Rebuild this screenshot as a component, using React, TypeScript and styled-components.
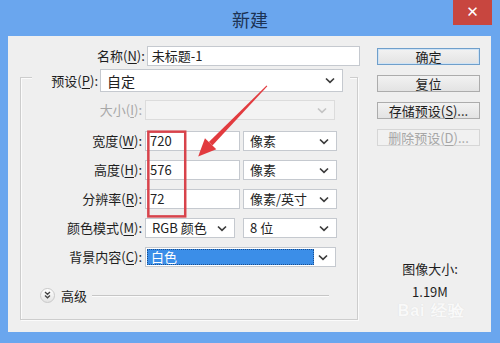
import React from 'react'
import styled, { createGlobalStyle } from 'styled-components'

const GlobalStyle = createGlobalStyle`
  html, body {
    margin: 0;
    padding: 0;
    background: #6aa6ee;
  }
  body {
    font-family: "Noto Sans CJK SC", "Noto Sans", sans-serif;
  }
`

const Window = styled.div`
  width: 500px;
  height: 343px;
  background: #6aa6ee;
  display: flex;
  flex-direction: column;
  overflow: hidden;
`

const TitleBar = styled.div`
  height: 36px;
  display: grid;
  grid-template-columns: 1fr auto 1fr;
  flex-shrink: 0;
`

const Title = styled.div`
  grid-column: 2;
  align-self: center;
  font-size: 18px;
  line-height: 20px;
  color: #1c3354;
  padding-top: 1px;
`

const CloseButton = styled.div`
  grid-column: 3;
  justify-self: end;
  align-self: start;
  margin-right: 8px;
  width: 39px;
  height: 25px;
  background: #c8463f;
  color: #fff;
  font-family: "DejaVu Sans", sans-serif;
  font-size: 15px;
  font-weight: bold;
  line-height: 25px;
  text-align: center;
`

const Client = styled.div`
  position: relative;
  margin: 0 9px 11px 8px;
  flex: 1;
  background: #efefef;
  display: flex;
  font-size: 13px;
  color: #1e1e1e;
`

const LeftPane = styled.div`
  width: 352px;
  padding-top: 10px;
`

const RightPane = styled.div`
  width: 103px;
  margin-left: 17px;
  padding-top: 12px;
  display: flex;
  flex-direction: column;
  gap: 10px;
`

const Row = styled.div<{ $labelWidth: number }>`
  display: grid;
  grid-template-columns: ${p => p.$labelWidth}px auto auto;
  justify-content: start;
  column-gap: 3px;
  align-items: center;
  height: 20px;
`

const Label = styled.span<{ $disabled?: boolean }>`
  text-align: right;
  white-space: nowrap;
  line-height: 20px;
  color: ${p => (p.$disabled ? '#a8a8a8' : '#1e1e1e')};
  u {
    text-underline-offset: 2px;
  }
`

const TextBox = styled.div<{ $width: number }>`
  width: ${p => p.$width}px;
  height: 20px;
  box-sizing: border-box;
  border: 1px solid #c5c9cf;
  background: #fff;
  padding-left: 4px;
  line-height: 18px;
  color: #222;
  font-size: 13px;
`

const Select = styled.div<{ $width: number; $height?: number; $disabled?: boolean }>`
  width: ${p => p.$width}px;
  height: ${p => p.$height || 20}px;
  box-sizing: border-box;
  border: 1px solid ${p => (p.$disabled ? '#dcdcdc' : '#c5c9cf')};
  background: ${p => (p.$disabled ? '#f3f3f3' : '#fff')};
  display: flex;
  align-items: center;
  justify-content: space-between;
  padding: 0 7px 0 6px;
  color: #222;
  line-height: 18px;
  svg {
    flex-shrink: 0;
  }
`

const Highlight = styled.div`
  flex: 1;
  align-self: stretch;
  margin: 1px 4px 1px -5px;
  background: #3b8ee8;
  outline: 1px dotted #1a4f8f;
  outline-offset: -1px;
  color: #fff;
  padding-left: 4px;
  line-height: 16px;
`

const NameRow = styled.div`
  display: flex;
  align-items: center;
  gap: 2px;
  height: 20px;
  padding-left: 89px;
`

const GroupBox = styled.div`
  margin: 11px 0 0 12px;
  width: 338px;
  height: 243px;
  box-sizing: border-box;
  border: 1px solid #cdcdcd;
  box-shadow: inset 1px 1px 0 #fbfbfb, 1px 1px 0 #fbfbfb;
  display: flex;
  flex-direction: column;
`

const GroupHeader = styled.div`
  margin: -9px 0 0 11px;
  width: 318px;
  height: 23px;
  background: #efefef;
  display: flex;
  align-items: center;
  gap: 2px;
`

const Fields = styled.div`
  display: flex;
  flex-direction: column;
  gap: 9px;
  margin-top: 8px;
`

const Advanced = styled.div`
  display: flex;
  align-items: center;
  margin: 20px 0 0 19px;
  height: 16px;
`

const RoundToggle = styled.div`
  width: 15px;
  height: 15px;
  border-radius: 50%;
  box-sizing: border-box;
  border: 1px solid #c9c9c9;
  background: linear-gradient(#ffffff, #e3e3e3);
  display: flex;
  align-items: center;
  justify-content: center;
  margin-right: 6px;
`

const AdvancedRule = styled.div`
  flex: 0 0 237px;
  margin-left: 5px;
  height: 1px;
  background: #c6c6c6;
  box-shadow: 0 1px 0 #fbfbfb;
`

const Button = styled.div<{ $primary?: boolean; $disabled?: boolean }>`
  height: 17px;
  box-sizing: border-box;
  border: 1px solid ${p => (p.$primary ? '#6f9fcb' : p.$disabled ? '#d6d6d6' : '#acacac')};
  background: ${p =>
    p.$disabled ? '#f1f1f1' : 'linear-gradient(#f2f2f2, #e3e3e3)'};
  box-shadow: ${p => (p.$primary ? 'inset 0 0 0 1px #cfe3f5' : 'none')};
  text-align: center;
  line-height: 15px;
  font-size: 13px;
  color: ${p => (p.$disabled ? '#a6a6a6' : '#1e1e1e')};
  u {
    text-underline-offset: 2px;
  }
`

const SizeInfo = styled.div`
  margin-top: 101px;
  text-align: center;
  line-height: 23px;
  font-size: 13px;
  color: #1e1e1e;
  padding-left: 3px;
`

const Watermark = styled.div`
  position: absolute;
  right: 26px;
  bottom: 12px;
  color: #f9f9f9;
  font-family: "Liberation Sans", Arial, sans-serif;
  font-size: 16px;
  line-height: 18px;
  font-weight: bold;
  letter-spacing: 1px;
  text-shadow: 0 0 1px #dadada;
  pointer-events: none;
`

const Annotation = styled.svg`
  position: absolute;
  left: 0;
  top: 0;
  width: 100%;
  height: 100%;
  pointer-events: none;
`

const Chevron = ({ light }: { light?: boolean }) => (
  <svg width="10" height="7" viewBox="0 0 10 7">
    <path
      d="M1 1.5 L5 5.3 L9 1.5"
      fill="none"
      stroke={light ? '#c4c4c4' : '#3c3c3c'}
      strokeWidth="1.7"
    />
  </svg>
)

const fields = [
  { label: '宽度', key: 'W', value: '720', unit: '像素' },
  { label: '高度', key: 'H', value: '576', unit: '像素' },
  { label: '分辨率', key: 'R', value: '72', unit: '像素/英寸' },
]

export default function App() {
  return (
    <Window>
      <GlobalStyle />
      <TitleBar>
        <Title>新建</Title>
        <CloseButton>✕</CloseButton>
      </TitleBar>

      <Client>
        <LeftPane>
          <NameRow>
            <Label>
              名称(<u>N</u>):
            </Label>
            <TextBox $width={216}>未标题-1</TextBox>
          </NameRow>

          <GroupBox>
            <GroupHeader>
              <Label style={{ width: 66 }}>
                预设(<u>P</u>):
              </Label>
              <Select $width={243} $height={23}>
                <span style={{ fontSize: 14 }}>自定</span>
                <Chevron />
              </Select>
            </GroupHeader>

            <Fields>
              <Row $labelWidth={121}>
                <Label $disabled>
                  大小(<u>I</u>):
                </Label>
                <Select $width={190} $disabled>
                  <span />
                  <Chevron light />
                </Select>
              </Row>

              {fields.map(f => (
                <Row $labelWidth={121} key={f.key} style={{ marginTop: f.key === 'W' ? 2 : 0 }}>
                  <Label>
                    {f.label}(<u>{f.key}</u>):
                  </Label>
                  <TextBox $width={95}>{f.value}</TextBox>
                  <Select $width={94}>
                    <span>{f.unit}</span>
                    <Chevron />
                  </Select>
                </Row>
              ))}

              <Row $labelWidth={121}>
                <Label>
                  颜色模式(<u>M</u>):
                </Label>
                <Select $width={90}>
                  <span>RGB 颜色</span>
                  <Chevron />
                </Select>
                <Select $width={94} style={{ marginLeft: 5 }}>
                  <span>8 位</span>
                  <Chevron />
                </Select>
              </Row>

              <Row $labelWidth={121}>
                <Label>
                  背景内容(<u>C</u>):
                </Label>
                <Select $width={191}>
                  <Highlight>白色</Highlight>
                  <Chevron />
                </Select>
              </Row>
            </Fields>

            <Advanced>
              <RoundToggle>
                <svg width="7" height="8" viewBox="0 0 7 8">
                  <path
                    d="M1 1 L3.5 3.3 L6 1 M1 4.5 L3.5 6.8 L6 4.5"
                    fill="none"
                    stroke="#444"
                    strokeWidth="1.3"
                  />
                </svg>
              </RoundToggle>
              <span>高级</span>
              <AdvancedRule />
            </Advanced>
          </GroupBox>
        </LeftPane>

        <RightPane>
          <Button $primary>确定</Button>
          <Button>复位</Button>
          <Button>
            存储预设(<u>S</u>)...
          </Button>
          <Button $disabled>
            删除预设(<u>D</u>)...
          </Button>
          <SizeInfo>
            图像大小:
            <br />
            1.19M
          </SizeInfo>
        </RightPane>

        <Watermark>Bai 经验</Watermark>

        <Annotation viewBox="0 0 483 297">
          <rect x="140" y="96" width="37" height="85" fill="none" stroke="#d8434b" strokeWidth="2.5" />
          <polygon points="259.4,50.3 258.6,49.7 200.7,106.4 204.3,109.8" fill="#e23b3f" />
          <polygon points="190,121 208.2,113.7 196.8,102.5" fill="#e23b3f" />
        </Annotation>
      </Client>
    </Window>
  )
}
